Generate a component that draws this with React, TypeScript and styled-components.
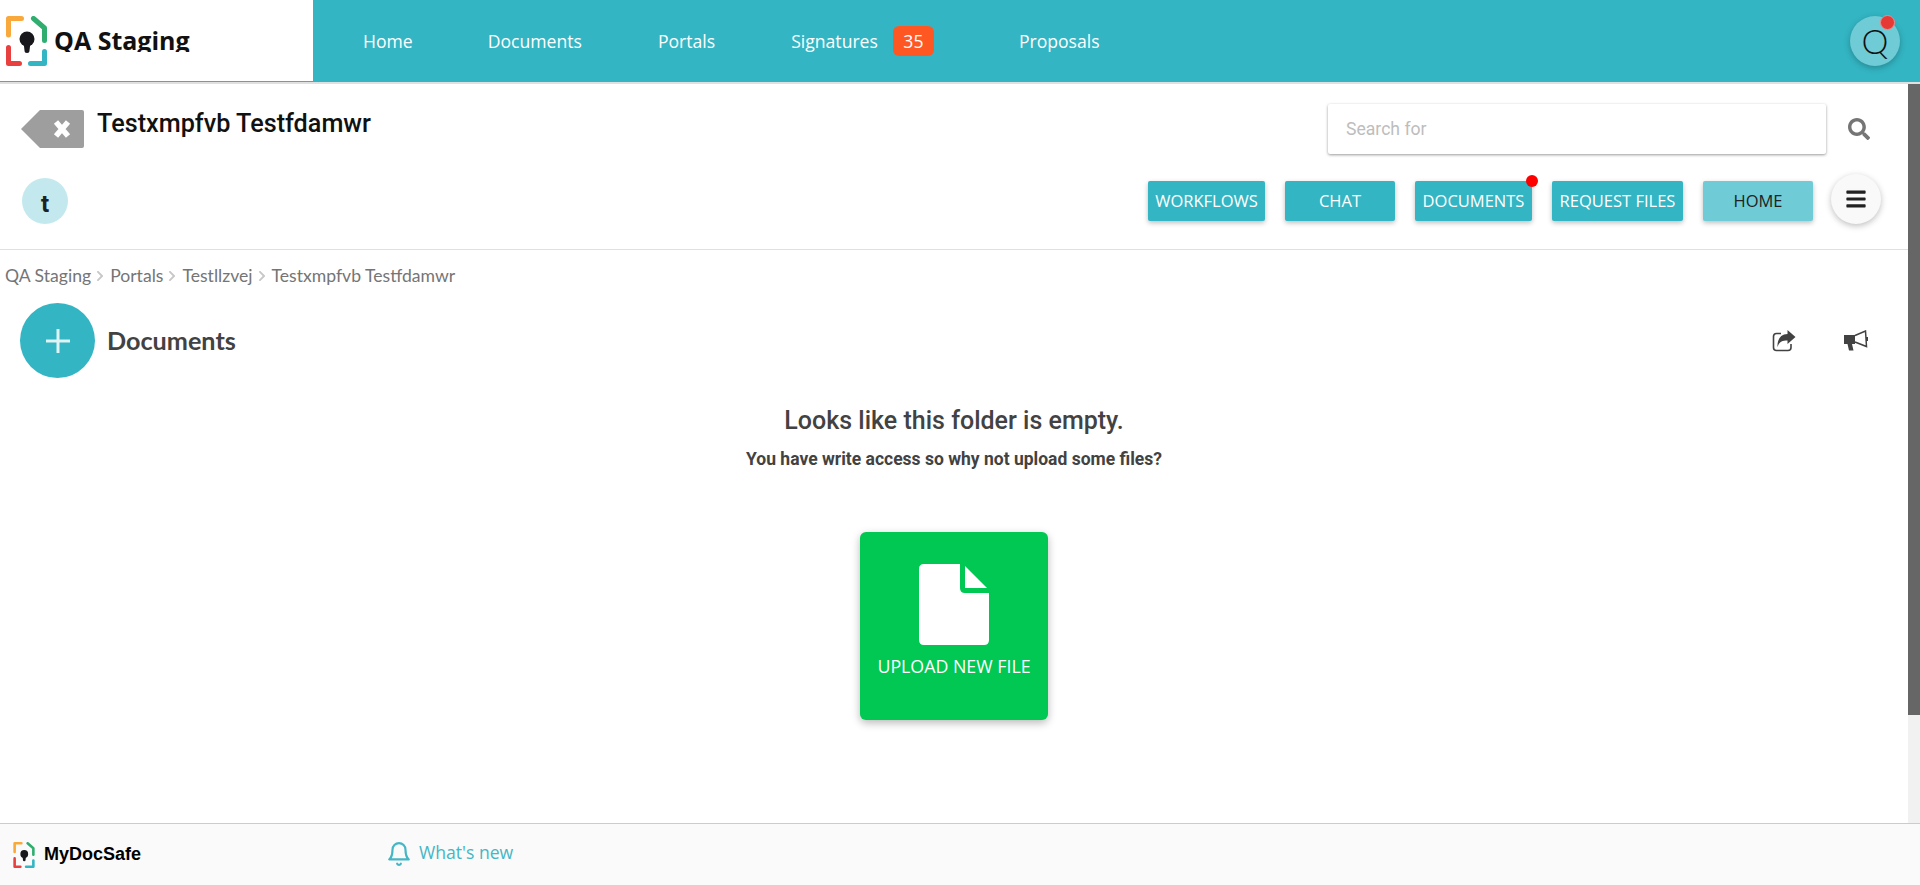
import React from "react";
import styled, { createGlobalStyle } from "styled-components";
import { FaSearch, FaBars, FaChevronRight } from "react-icons/fa";
import { FiBell } from "react-icons/fi";

const Global = createGlobalStyle`
  html, body { margin: 0; padding: 0; height: 100%; overflow: hidden; background: #fff; }
  * { box-sizing: border-box; }
`;

const Page = styled.div`
  width: 1920px;
  height: 885px;
  display: flex;
  flex-direction: column;
  font-family: "Open Sans", sans-serif;
`;

const TopBar = styled.header`
  height: 84px;
  flex: none;
  display: flex;
  background: #33b5c3;
  border-bottom: 2px solid #e0e0e0;
`;

const Brand = styled.div`
  width: 313px;
  background: #fff;
  border-bottom: 1px solid #33b5c3;
  display: flex;
  align-items: flex-start;
  padding: 16px 0 0 6px;
  gap: 7px;
`;

const BrandName = styled.div`
  height: 36px;
  padding-top: 8px;
  overflow: hidden;
  font: 700 25px/32px "Open Sans", sans-serif;
  color: #111;
  white-space: nowrap;
`;

const Nav = styled.nav`
  flex: 1;
  display: flex;
  align-items: center;
  padding: 0 20px 0 50px;
`;

const NavLink = styled.a<{ $gap: number }>`
  font-size: 17.6px;
  color: #fff;
  margin-right: ${(p) => p.$gap}px;
  white-space: nowrap;
`;

const CountBadge = styled.span`
  width: 41px;
  height: 30px;
  border-radius: 6px;
  background: #ff5722;
  color: #fff;
  font-size: 17.6px;
  display: flex;
  align-items: center;
  justify-content: center;
  margin-right: 85px;
`;

const UserAvatar = styled.div`
  position: relative;
  margin-left: auto;
  width: 50px;
  height: 50px;
  border-radius: 50%;
  background: #6fcbd5;
  color: #111;
  font: 300 34px/50px "Lato", sans-serif;
  text-align: center;
  box-shadow: 0 2px 6px rgba(0, 0, 0, 0.25);
`;

const AvatarDot = styled.span`
  position: absolute;
  top: -1px;
  right: 5px;
  width: 15px;
  height: 15px;
  border-radius: 50%;
  background: #e53935;
  border: 1px solid #f48a8a;
`;

const Middle = styled.div`
  flex: 1;
  min-height: 0;
  display: flex;
`;

const Content = styled.main`
  flex: 1;
  min-width: 0;
  display: flex;
  flex-direction: column;
`;

const ScrollRail = styled.div`
  width: 12px;
  flex: none;
  background: #f1f1f1;
`;

const ScrollThumb = styled.div`
  height: 631px;
  background: #666;
`;

const PortalHead = styled.section`
  height: 166px;
  flex: none;
  border-bottom: 1px solid #e0e0e0;
  padding: 20px 27px 0 0;
`;

const HeadRow = styled.div`
  display: flex;
  justify-content: space-between;
  align-items: flex-start;
`;

const NameGroup = styled.div`
  display: flex;
  align-items: flex-start;
  padding: 6px 0 0 21px;
  gap: 13px;
`;

const PortalName = styled.h1`
  margin: -2px 0 0;
  font: 500 25.2px/32px "Roboto", sans-serif;
  color: #111;
  white-space: nowrap;
`;

const SearchGroup = styled.div`
  display: flex;
  align-items: center;
  gap: 22px;
  margin-right: 11px;
  color: #757575;
`;

const SearchBox = styled.div`
  width: 498px;
  height: 50px;
  background: #fff;
  box-shadow: 0 1px 3px rgba(0, 0, 0, 0.4);
  border-radius: 2px;
  padding: 0 18px;
  font: 400 17.6px/50px "Roboto", sans-serif;
  color: #bdbdbd;
`;

const ActionRow = styled(HeadRow)`
  margin-top: 20px;
  height: 50px;
`;

const Initial = styled.div`
  width: 46px;
  height: 46px;
  margin: 4px 0 0 22px;
  padding-top: 3px;
  border-radius: 50%;
  background: #c3e9ee;
  color: #212121;
  font: 700 24px/46px "Roboto", sans-serif;
  text-align: center;
`;

const Actions = styled.div`
  display: flex;
  align-items: flex-start;
`;

const ActionButton = styled.button<{ $w: number; $gap: number; $light?: boolean }>`
  position: relative;
  width: ${(p) => p.$w}px;
  height: 40px;
  margin: 7px ${(p) => p.$gap}px 0 0;
  padding: 0 0 2px;
  border: 0;
  border-radius: 2px;
  background: ${(p) => (p.$light ? "#6fcbd5" : "#33b5c3")};
  color: ${(p) => (p.$light ? "#212121" : "#fff")};
  font: 400 16.5px "Open Sans", sans-serif;
  white-space: nowrap;
  box-shadow: 0 2px 5px rgba(0, 0, 0, 0.26);
`;

const ButtonDot = styled.span`
  position: absolute;
  top: -6px;
  right: -6px;
  width: 12px;
  height: 12px;
  border-radius: 50%;
  background: #f00;
`;

const MenuButton = styled.div`
  width: 50px;
  height: 50px;
  border-radius: 50%;
  background: #f9f9f9;
  color: #212121;
  display: flex;
  align-items: center;
  justify-content: center;
  box-shadow: 0 2px 6px rgba(0, 0, 0, 0.25);
`;

const Crumbs = styled.div`
  height: 53px;
  flex: none;
  display: flex;
  align-items: center;
  padding: 0 0 2px 5px;
  font: 400 17.6px "Lato", sans-serif;
  color: #757575;
`;

const Sep = styled.span`
  display: inline-flex;
  margin: 0 4px 0 3px;
  color: #c8c8c8;
  stroke: #c8c8c8;
  stroke-width: 40px;
`;

const DocRow = styled.div`
  height: 75px;
  flex: none;
  display: flex;
  align-items: center;
  padding: 0 39px 0 20px;
`;

const AddButton = styled.div`
  width: 75px;
  height: 75px;
  border-radius: 50%;
  background: #33b5c3;
  display: flex;
  align-items: center;
  justify-content: center;
`;

const DocTitle = styled.h2`
  margin: 0 0 2px 12px;
  font: 700 25.2px "Lato", sans-serif;
  color: #424242;
`;

const DocTools = styled.div`
  margin-left: auto;
  display: flex;
  align-items: center;
  gap: 48px;
`;

const Empty = styled.section`
  display: flex;
  flex-direction: column;
  align-items: center;
`;

const EmptyTitle = styled.h3`
  margin: 26px 0 0;
  font: 500 25px/34px "Roboto", sans-serif;
  color: #424242;
`;

const EmptyHint = styled.p`
  margin: 10px 0 0;
  font: 700 17.5px/22px "Roboto", sans-serif;
  color: #424242;
`;

const UploadCard = styled.div`
  width: 188px;
  height: 188px;
  margin-top: 62px;
  border-radius: 6px;
  background: #00c853;
  color: #fff;
  box-shadow: 0 3px 8px rgba(0, 0, 0, 0.28);
  display: flex;
  flex-direction: column;
  align-items: center;
  padding-top: 32px;
  font-size: 17.8px;
`;

const UploadLabel = styled.span`
  margin-top: 9px;
  white-space: nowrap;
`;

const Footer = styled.footer`
  height: 62px;
  flex: none;
  background: #fafafa;
  border-top: 1px solid #ccc;
  display: flex;
  align-items: center;
  padding-left: 13px;
`;

const FooterBrand = styled.div`
  width: 373px;
  display: flex;
  align-items: center;
  gap: 9px;
  font: 700 18px "Liberation Sans", sans-serif;
  color: #000;
`;

const WhatsNew = styled.a`
  display: flex;
  align-items: center;
  gap: 7px;
  color: #45b6c5;
  font-size: 17.6px;
`;

const WhatsNewText = styled.span`
  margin-bottom: 5px;
`;

const BellMark = styled.span`
  display: inline-flex;
  margin-bottom: 2px;
`;

const Logo = ({ w, h }: { w: number; h: number }) => (
  <svg width={w} height={h} viewBox="6 16 41 50" fill="none" strokeWidth="5" strokeLinecap="round" strokeLinejoin="round">
    <path d="M8.500 35V18.500H21.500" stroke="#f9a83c" />
    <path d="M33.500 18.500L44.500 28V40.500" stroke="#2fae6f" />
    <path d="M8.500 47.500V63.500H19.500" stroke="#e8403e" />
    <path d="M30.500 63.500H44.500V51.500" stroke="#33b5c3" />
    <circle cx="27" cy="39" r="7.500" fill="#17171c" />
    <path d="M23.500 42L24.500 50.500a2.500 2.500 0 0 0 5 0L30.500 42Z" fill="#17171c" />
  </svg>
);

const BackTag = () => (
  <svg width="63" height="38" viewBox="0 0 63 38">
    <path d="M0 19L19 0H61a2 2 0 0 1 2 2V36a2 2 0 0 1-2 2H19Z" fill="#9e9e9e" />
    <path d="M35 12L47 26M47 12L35 26" stroke="#fff" strokeWidth="5.500" />
  </svg>
);

const ShareIcon = () => (
  <svg width="24" height="22" viewBox="0 0 24 22" fill="none">
    <path d="M9 3.500H4.500Q1.500 3.500 1.500 6.500V17.500Q1.500 20.500 4.500 20.500H16Q19 20.500 19 17.500V14" stroke="#424242" strokeWidth="1.600" />
    <path d="M15.500 0L23.500 7L15.500 14V10.500C10 10.500 7 12 5.500 17C5 10 8.500 4 15.500 4Z" fill="#424242" />
  </svg>
);

const HornIcon = () => (
  <svg width="25" height="21" viewBox="0 0 25 21" fill="none">
    <path d="M0 5H11V14H8L9.500 20.500H5L3.500 14H0Z" fill="#424242" />
    <path d="M11 5.500L21.500 1L22.500 16.500L11 12" stroke="#424242" strokeWidth="1.500" />
    <path d="M22 7h2v4h-2z" fill="#424242" />
  </svg>
);

const FileIcon = () => (
  <svg width="70" height="81" viewBox="0 0 70 81">
    <path d="M5 0H41V24Q41 29 46 29H70V76Q70 81 65 81H5Q0 81 0 76V5Q0 0 5 0Z" fill="#fff" />
    <path d="M46 2L68 24H46Z" fill="#fff" />
  </svg>
);

const PlusIcon = () => (
  <svg width="24" height="24" viewBox="0 0 24 24">
    <path d="M12 0V24M0 12H24" stroke="#dff3f5" strokeWidth="3" />
  </svg>
);

const crumbs = ["QA Staging", "Portals", "Testllzvej"];

export default function App() {
  return (
    <Page>
      <Global />
      <TopBar>
        <Brand>
          <Logo w={41} h={50} />
          <BrandName>QA Staging</BrandName>
        </Brand>
        <Nav>
          <NavLink $gap={75}>Home</NavLink>
          <NavLink $gap={76}>Documents</NavLink>
          <NavLink $gap={76}>Portals</NavLink>
          <NavLink $gap={15}>Signatures</NavLink>
          <CountBadge>35</CountBadge>
          <NavLink $gap={0}>Proposals</NavLink>
          <UserAvatar>
            Q
            <AvatarDot />
          </UserAvatar>
        </Nav>
      </TopBar>
      <Middle>
        <Content>
          <PortalHead>
            <HeadRow>
              <NameGroup>
                <BackTag />
                <PortalName>Testxmpfvb Testfdamwr</PortalName>
              </NameGroup>
              <SearchGroup>
                <SearchBox>Search for</SearchBox>
                <FaSearch size={22} />
              </SearchGroup>
            </HeadRow>
            <ActionRow>
              <Initial>t</Initial>
              <Actions>
                <ActionButton $w={117} $gap={20}>WORKFLOWS</ActionButton>
                <ActionButton $w={110} $gap={20}>CHAT</ActionButton>
                <ActionButton $w={117} $gap={20}>
                  DOCUMENTS
                  <ButtonDot />
                </ActionButton>
                <ActionButton $w={131} $gap={20}>REQUEST FILES</ActionButton>
                <ActionButton $w={110} $gap={18} $light>HOME</ActionButton>
                <MenuButton>
                  <FaBars size={22} />
                </MenuButton>
              </Actions>
            </ActionRow>
          </PortalHead>
          <Crumbs>
            {crumbs.map((c) => (
              <React.Fragment key={c}>
                {c}
                <Sep>
                  <FaChevronRight size={12} />
                </Sep>
              </React.Fragment>
            ))}
            Testxmpfvb Testfdamwr
          </Crumbs>
          <DocRow>
            <AddButton>
              <PlusIcon />
            </AddButton>
            <DocTitle>Documents</DocTitle>
            <DocTools>
              <ShareIcon />
              <HornIcon />
            </DocTools>
          </DocRow>
          <Empty>
            <EmptyTitle>Looks like this folder is empty.</EmptyTitle>
            <EmptyHint>You have write access so why not upload some files?</EmptyHint>
            <UploadCard>
              <FileIcon />
              <UploadLabel>UPLOAD NEW FILE</UploadLabel>
            </UploadCard>
          </Empty>
        </Content>
        <ScrollRail>
          <ScrollThumb />
        </ScrollRail>
      </Middle>
      <Footer>
        <FooterBrand>
          <Logo w={22} h={26} />
          MyDocSafe
        </FooterBrand>
        <WhatsNew>
          <BellMark>
            <FiBell size={26} />
          </BellMark>
          <WhatsNewText>What's new</WhatsNewText>
        </WhatsNew>
      </Footer>
    </Page>
  );
}
